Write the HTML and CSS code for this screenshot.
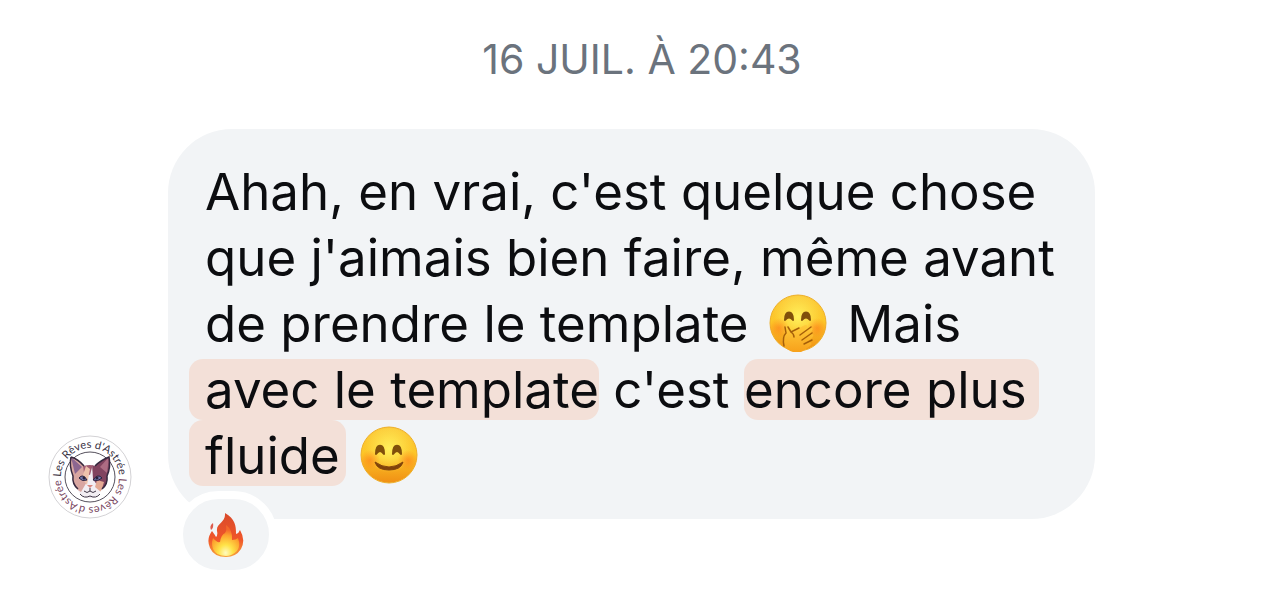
FILE: index.html
```html
<!DOCTYPE html>
<html lang="fr">
<head>
    <meta charset="UTF-8">
    <meta name="viewport" content="width=device-width, initial-scale=1.0">
    <title>Conversation</title>
    <link rel="stylesheet" href="styles.css">
</head>
<body>
    <!-- Shared gradients for the emojis -->
    <svg class="defs" width="0" height="0" aria-hidden="true">
        <defs>
            <linearGradient id="face" x1="0" y1="0" x2="0" y2="1">
                <stop offset="0" stop-color="#fbc93a"/>
                <stop offset="0.5" stop-color="#fdc627"/>
                <stop offset="1" stop-color="#f08f14"/>
            </linearGradient>
            <radialGradient id="glow" cx="0.5" cy="0.38" r="0.45">
                <stop offset="0" stop-color="#fff05c"/>
                <stop offset="1" stop-color="#fff05c" stop-opacity="0"/>
            </radialGradient>
            <radialGradient id="blush">
                <stop offset="0" stop-color="#ff7a1c" stop-opacity="0.6"/>
                <stop offset="1" stop-color="#ff7a1c" stop-opacity="0"/>
            </radialGradient>
            <linearGradient id="hand" x1="0" y1="0" x2="0" y2="1">
                <stop offset="0" stop-color="#ffcb3b"/>
                <stop offset="1" stop-color="#f7a01a"/>
            </linearGradient>
            <linearGradient id="flame" x1="0" y1="0" x2="0" y2="1">
                <stop offset="0" stop-color="#d94a2b"/>
                <stop offset="0.6" stop-color="#f0562a"/>
                <stop offset="1" stop-color="#f8a33a"/>
            </linearGradient>
            <radialGradient id="core" cx="0.5" cy="0.9" r="0.75">
                <stop offset="0" stop-color="#fffbc0"/>
                <stop offset="0.35" stop-color="#ffe348"/>
                <stop offset="0.75" stop-color="#fda52f"/>
                <stop offset="1" stop-color="#f4682b"/>
            </radialGradient>
        </defs>
    </svg>

    <main class="chat">
        <time class="date" datetime="07-16T20:43">16 JUIL. À 20:43</time>

        <div class="message">
            <svg class="avatar" viewBox="0 0 84 84" role="img" aria-label="Les Rêves d'Astrée">
                <defs>
                    <path id="arc-top" d="M13 42 A29 29 0 0 1 71 42"/>
                    <path id="arc-bottom" d="M71 43 A29 29 0 0 1 13 43"/>
                    <clipPath id="head">
                        <path d="M23 22 Q30 24 36 31 Q42 29 47 31 Q53 25 61 22 Q63 32 59 41 Q60 50 54 54 L50 60 Q42 67 33 60 L29 54 Q24 49 25 41 Q21 31 23 22Z"/>
                    </clipPath>
                </defs>
                <circle cx="42" cy="42" r="41" fill="#fff" stroke="#d3d2d5"/>
                <g class="avatar-text">
                    <text><textPath href="#arc-top">Les Rêves d'Astrée</textPath></text>
                    <text class="faded"><textPath href="#arc-bottom">Les Rêves d'Astrée</textPath></text>
                </g>
                <circle cx="42" cy="42" r="25" fill="#fff" stroke="#55505c"/>
                <g clip-path="url(#head)">
                    <rect x="20" y="20" width="44" height="46" fill="#f2eef3"/>
                    <path d="M22 20 L37 30 L40 45 L33 57 L22 50Z" fill="#d9a6a1"/>
                    <path d="M44 29 L62 20 L62 48 L53 56 L45 44Z" fill="#81435f"/>
                    <path d="M35 30 L45 29 L42 40 L36 38Z" fill="#a15b72"/>
                    <path d="M38 31 L42 34 L39 50 L34 43Z" fill="#efc2ac"/>
                    <path d="M49 45 L56 47 L53 57 L47 52Z" fill="#e4aa94"/>
                    <path d="M23 22 L34 32 L27 39Z" fill="#8c6690"/>
                    <path d="M61 22 L52 32 L59 38Z" fill="#ad6c83"/>
                </g>
                <path d="M23 22 Q30 24 36 31 M47 31 Q53 25 61 22 Q63 32 59 41 M23 22 Q21 31 25 41 Q24 49 30 54 M59 41 Q60 49 54 54" fill="none" stroke="#36283e" stroke-width="1.5"/>
                <path d="M31 43 Q35 38 39 45 Q34 47 31 43Z M45 45 Q50 38 54 43 Q50 47 45 45Z" fill="#7377ad" stroke="#29213c"/>
                <circle cx="36" cy="43" r="1.5" fill="#29213c"/>
                <circle cx="49" cy="43" r="1.5" fill="#29213c"/>
                <path d="M39 50 H45 L42 53Z" fill="#d98982"/>
                <path d="M42 53 V56 M36 56 Q39 59 42 56 Q45 59 48 56 M32 59 Q36 64 42 61 Q48 64 52 59" fill="none" stroke="#403747"/>
            </svg>

            <div class="bubble">
                <p class="text">
                    Ahah, en vrai, c'est quelque chose<br>
                    que j'aimais bien faire, même avant<br>
                    de prendre le template
                    <svg class="emoji" viewBox="0 0 58 58" role="img" aria-label="Visage avec la main sur la bouche">
                        <circle cx="29" cy="29" r="28" fill="url(#face)" stroke="#eeb02b"/>
                        <circle cx="29" cy="29" r="27" fill="url(#glow)"/>
                        <circle cx="10" cy="34" r="10" fill="url(#blush)"/>
                        <circle cx="48" cy="34" r="10" fill="url(#blush)"/>
                        <path d="M16 26 C16 16 24 16 24 26 Q20 21 16 26Z M33 26 C33 16 41 16 41 26 Q37 21 33 26Z" fill="#80500b" stroke="#80500b" stroke-width="2" stroke-linejoin="round"/>
                        <path d="M16 32 Q19 30 20 36 L22 38 L36 31 Q40 31 38 34 L33 38 L40 34 Q45 33 43 37 L36 43 L42 40 Q46 40 43 44 L37 49 L41 48 Q44 49 41 52 L34 57 Q29 60 24 58 Q18 56 15 52 Q11 45 16 40Z" fill="url(#hand)"/>
                        <path d="M16 33 L17 39 Q13 43 15 52 M19 33 L22 38 L30 34 M31 41 L42 33 M33 46 L43 39 M35 50 L43 46 M22 38 Q25 40 25 43" fill="none" stroke="#a65f09" stroke-width="1.5" stroke-linecap="round"/>
                    </svg>
                    Mais<br>
                    <mark class="start">avec le template</mark> c'est <mark class="end">encore plus</mark><br>
                    <mark class="start last">fluide</mark>
                    <svg class="emoji" viewBox="0 0 58 58" role="img" aria-label="Visage souriant">
                        <circle cx="29" cy="29" r="28" fill="url(#face)" stroke="#eeb02b"/>
                        <circle cx="29" cy="29" r="27" fill="url(#glow)"/>
                        <circle cx="10" cy="34" r="10" fill="url(#blush)"/>
                        <circle cx="48" cy="34" r="10" fill="url(#blush)"/>
                        <path d="M16 28 C16 17 24 17 24 28 Q20 22 16 28Z M33 28 C33 17 41 17 41 28 Q37 22 33 28Z" fill="#80500b" stroke="#80500b" stroke-width="2" stroke-linejoin="round"/>
                        <path d="M15 36 Q29 46 43 36 Q41 44 29 44 Q17 44 15 36Z" fill="#80430b" stroke="#80430b" stroke-linejoin="round"/>
                    </svg>
                </p>

                <button class="reaction" type="button" aria-label="Réaction feu">
                    <svg class="fire" viewBox="0 0 36 46" aria-hidden="true">
                        <path d="M17 1 C27 7 28 13 28 22 Q31 21 32 18 Q38 28 33 37 Q28 45 18 45 Q6 45 2 36 Q-2 27 4 19 Q7 23 8 25 Q10 23 9 19 C8 11 18 11 17 1Z" fill="url(#flame)"/>
                        <path d="M18 13 Q25 18 24 28 Q28 28 30 26 Q33 34 29 39 Q24 44 18 44 Q8 44 5 37 Q3 31 5 26 Q9 31 12 30 Q13 23 17 21 Q19 18 18 13Z" fill="url(#core)"/>
                        <path d="M5 11 Q1 14 3 18 Q6 16 5 11Z" fill="#dd5b4d"/>
                    </svg>
                </button>
            </div>
        </div>
    </main>
</body>
</html>
```

FILE: styles.css
```css
body {
    margin: 0;
    background-color: #fff;
    color: #0c0d10;
    font-family: Inter, "Liberation Sans", sans-serif;
}

.defs {
    position: absolute;
}

.chat {
    padding: 33px 0;
}

.date {
    display: block;
    margin-bottom: 44px;
    text-align: center;
    font-size: 41px;
    line-height: 52px;
    color: #6b737d;
}

.message {
    display: flex;
    align-items: flex-end;
    gap: 36px;
    padding: 0 189px 52px 48px;
}

.avatar {
    flex: none;
    width: 84px;
    height: 84px;
}

.avatar-text {
    font-family: Lato, sans-serif;
    font-size: 11px;
    fill: #38313f;
}

.avatar-text .faded {
    fill: #79475f;
}

.bubble {
    position: relative;
    flex: 1;
    box-sizing: border-box;
    padding: 30px 37px;
    border-radius: 64px;
    background-color: #f2f4f6;
}

.text {
    margin: 0;
    font-size: 51px;
    line-height: 66px;
    white-space: nowrap;
}

.emoji {
    width: 58px;
    height: 58px;
    margin: -4px 6px;
    vertical-align: -6px;
}

/* Highlighted words */
mark {
    border-radius: 14px;
    background-color: #f3e0d8;
    color: inherit;
}

mark.start {
    margin-left: -16px;
    padding-left: 16px;
}

mark.end {
    padding-right: 12px;
}

mark.last {
    margin-right: -6px;
    padding-top: 5px;
    padding-right: 6px;
}

/* Reaction hanging from the bottom of the bubble */
.reaction {
    position: absolute;
    bottom: -59px;
    left: 7px;
    display: flex;
    align-items: center;
    justify-content: center;
    box-sizing: border-box;
    width: 102px;
    height: 87px;
    padding: 0;
    border: 8px solid #fff;
    border-radius: 44px;
    background-color: #f2f4f6;
}

.fire {
    width: 36px;
    height: 46px;
}
```
